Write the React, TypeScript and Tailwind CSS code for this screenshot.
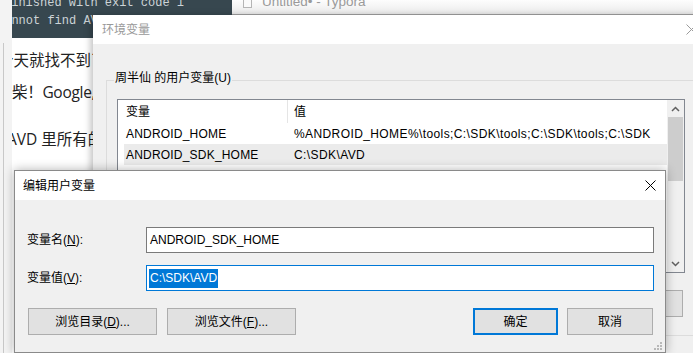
const ui = "font-['Liberation_Sans','Noto_Sans_CJK_SC',sans-serif]";

function CloseX({ className }: { className: string }) {
  return (
    <svg width="11" height="11" viewBox="0 0 11 11" className={className}>
      <path d="M0.5 0.5 L10.5 10.5 M10.5 0.5 L0.5 10.5" stroke="currentColor" strokeWidth="1" fill="none" />
    </svg>
  );
}

function Chevron({ down }: { down?: boolean }) {
  return (
    <svg width="9" height="6" viewBox="0 0 9 6" className="text-[#606060]">
      <path
        d={down ? 'M1 1 L4.5 4.5 L8 1' : 'M1 5 L4.5 1.5 L8 5'}
        stroke="currentColor"
        strokeWidth="1.5"
        fill="none"
      />
    </svg>
  );
}

function Terminal() {
  return (
    <div className="absolute left-[12px] top-0 h-[38px] w-[220px] overflow-hidden bg-[#37474f] font-['Liberation_Mono',monospace] text-[12px] leading-[18px] text-[#cdd4d7] whitespace-nowrap">
      <div className="-ml-[8px] -mt-[6px]">finished with exit code 1</div>
      <div className="-ml-[15px]">Cannot find AVD system path. Please define ANDROID_SDK_ROOT</div>
    </div>
  );
}

function TyporaPage() {
  return (
    <div className="absolute left-[12px] top-[38px] h-[315px] w-[81px] overflow-hidden bg-white font-['Open_Sans','Noto_Sans_CJK_SC',sans-serif] text-[15.5px] leading-[24px] text-[#222] whitespace-nowrap">
      <div className="-ml-[14px] mt-[10px]">今天就找不到了</div>
      <div className="mt-[8px] tracking-[-0.3px]">柴！Google,</div>
      <div className="-ml-[5px] mt-[23px]">AVD 里所有的</div>
    </div>
  );
}

function TyporaBar() {
  return (
    <div className="absolute left-[232px] top-0 flex h-[15px] w-[461px] items-start overflow-hidden border-b border-[#a0a0a0] bg-linear-to-b from-[#fdfdfd] to-[#ebebeb]">
      <svg width="9" height="10" viewBox="0 0 9 10" className="ml-[11px] -mt-[2px]">
        <rect x="0.5" y="0.5" width="8" height="9" fill="#fafafa" stroke="#b5b5b5" />
      </svg>
      <span className={`ml-[10px] -mt-[6px] text-[13.5px] leading-[16px] text-[#9a9a9a] ${ui}`}>Untitled• - Typora</span>
    </div>
  );
}

function EnvDialog() {
  const rows = [
    { name: 'ANDROID_HOME', value: '%ANDROID_HOME%\\tools;C:\\SDK\\tools;C:\\SDK\\tools;C:\\SDK', sel: false },
    { name: 'ANDROID_SDK_HOME', value: 'C:\\SDK\\AVD', sel: true },
  ];
  return (
    <div className={`absolute left-[93px] top-[15px] h-[345px] w-[610px] bg-[#f0f0f0] shadow-[-3px_0_6px_rgba(0,0,0,0.22)] ${ui}`}>
      <div className="flex h-[29px] items-center bg-white pl-[9px] text-[12px] text-[#999]">
        环境变量
        <CloseX className="ml-auto mr-[6px] text-[#9a9a9a]" />
      </div>
      <div className="pl-[13px] pt-[36px]">
        <div className="h-[256px] w-[640px] border border-[#dcdcdc]">
          <span className="ml-[7px] -mt-[11px] block h-[16px] w-fit bg-[#f0f0f0] px-[1px] text-[12px] leading-[16px] text-black">
            周半仙 的用户变量(U)
          </span>
          <div className="ml-[10px] mt-[13px] flex h-[174px] w-[568px] border border-[#828790] bg-white text-[12px] text-black">
            <div className="min-w-0 flex-1 overflow-hidden whitespace-nowrap">
              <div className="ml-[6px] flex h-[23px] items-center">
                <div className="flex h-[23px] w-[164px] shrink-0 items-center border-r border-[#e5e5e5] pl-[2px]">变量</div>
                <div className="pl-[6px]">值</div>
              </div>
              {rows.map((r) => (
                <div key={r.name} className={`ml-[6px] flex h-[21px] items-center ${r.sel ? 'bg-[#ebebeb]' : ''}`}>
                  <div className="w-[164px] shrink-0 pl-[2px] tracking-[0.2px]">{r.name}</div>
                  <div className="shrink-0 pl-[6px] tracking-[0.4px]">{r.value}</div>
                </div>
              ))}
            </div>
            <div className="flex w-[17px] shrink-0 flex-col bg-[#f0f0f0]">
              <div className="flex h-[17px] items-center justify-center">
                <Chevron />
              </div>
              <div className="mx-[1px] h-[64px] bg-[#cdcdcd]" />
              <div className="flex-1" />
              <div className="flex h-[17px] items-center justify-center">
                <Chevron down />
              </div>
            </div>
          </div>
          <div className="ml-[10px] mt-[17px] flex w-[568px] justify-end gap-[9px] pr-[2px]">
            {['新建(N)...', '编辑(E)...', '删除(D)'].map((b) => (
              <div key={b} className="flex h-[27px] w-[85px] items-center justify-center border border-[#adadad] bg-[#e1e1e1] text-[12px]">
                {b}
              </div>
            ))}
          </div>
        </div>
      </div>
    </div>
  );
}

function Grip() {
  const dots = [
    [6, 0],
    [3, 3],
    [6, 3],
    [0, 6],
    [3, 6],
    [6, 6],
  ];
  return (
    <svg width="8" height="8" viewBox="0 0 8 8" className="absolute bottom-[2px] right-[3px]">
      {dots.map(([x, y]) => (
        <rect key={`${x}-${y}`} x={x} y={y} width="2" height="2" fill="#b8b8b8" />
      ))}
    </svg>
  );
}

function EditDialog() {
  return (
    <div className={`absolute left-[14px] top-[170px] h-[183px] w-[652px] border border-[#8a8a8a] bg-[#f0f0f0] text-[12px] text-black shadow-[0_0_10px_rgba(0,0,0,0.3)] ${ui}`}>
      <div className="flex h-[29px] items-center bg-white pl-[8px]">
        编辑用户变量
        <CloseX className="ml-auto mr-[9px] text-black" />
      </div>
      <div className="pl-[12px] pr-[11px] pt-[27px]">
        <div className="flex h-[26px] items-center">
          <div className="w-[119px]">
            变量名(<u>N</u>):
          </div>
          <div className="flex h-[26px] flex-1 items-center border border-[#7a7a7a] bg-white pl-[3px]">ANDROID_SDK_HOME</div>
        </div>
        <div className="mt-[12px] flex h-[26px] items-center">
          <div className="w-[119px]">
            变量值(<u>V</u>):
          </div>
          <div className="flex h-[26px] flex-1 items-center border border-[#0078d7] bg-white pl-[2px]">
            <span className="inline-block h-[19px] bg-[#0078d7] px-[1px] leading-[19px] text-white">C:\SDK\AVD</span>
          </div>
        </div>
        <div className="mt-[17px] flex pl-[1px] pr-[1px]">
          <div className="flex h-[27px] w-[129px] items-center justify-center border border-[#adadad] bg-[#e1e1e1]">
            浏览目录(<u>D</u>)...
          </div>
          <div className="ml-[10px] flex h-[27px] w-[129px] items-center justify-center border border-[#adadad] bg-[#e1e1e1]">
            浏览文件(<u>F</u>)...
          </div>
          <div className="ml-auto flex h-[27px] w-[85px] items-center justify-center border-2 border-[#0078d7] bg-[#e1e1e1]">
            确定
          </div>
          <div className="ml-[9px] flex h-[27px] w-[86px] items-center justify-center border border-[#adadad] bg-[#e1e1e1]">
            取消
          </div>
        </div>
      </div>
      <Grip />
    </div>
  );
}

export default function App() {
  return (
    <div className="relative h-[353px] w-[693px] overflow-hidden bg-[#f0f0f0]">
      <div className="absolute left-0 top-0 h-full w-[12px] bg-[#f3f3f3]">
        <div className="ml-[3px] mt-[43px] h-[310px] w-px bg-[#c8c8c8]" />
      </div>
      <Terminal />
      <TyporaPage />
      <TyporaBar />
      <EnvDialog />
      <EditDialog />
    </div>
  );
}
